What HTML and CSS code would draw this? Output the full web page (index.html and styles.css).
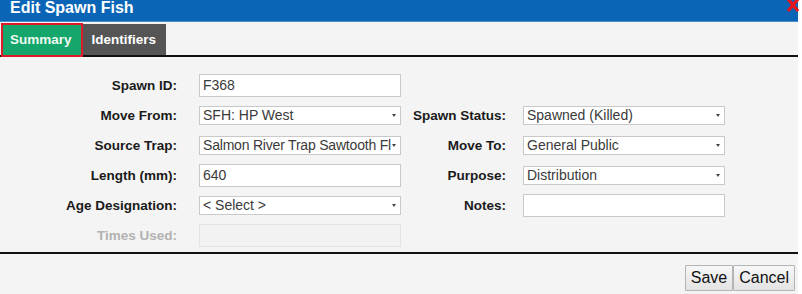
FILE: index.html
```html
<!DOCTYPE html>
<html>
<head>
<meta charset="utf-8">
<link rel="stylesheet" href="styles.css">
</head>
<body>
<div class="dialog">
  <div class="titlebar">
    <span class="title">Edit Spawn Fish</span>
    <svg class="close" width="14" height="16" viewBox="0 0 14 16"><path d="M2 -1 L12 11 M12 -1 L2 11" stroke="#e8141c" stroke-width="3.2" stroke-linecap="butt"/></svg>
  </div>
  <div class="tabbar">
    <div class="tab active">Summary</div>
    <div class="tab">Identifiers</div>
  </div>
  <div class="form">
    <label class="lbl">Spawn ID:</label>
    <div class="field"><div class="input">F368</div></div>
    <div class="lbl2"></div>
    <div></div>

    <label class="lbl">Move From:</label>
    <div class="field"><div class="select"><span class="val">SFH: HP West</span></div></div>
    <label class="lbl2">Spawn Status:</label>
    <div class="field"><div class="select"><span class="val">Spawned (Killed)</span></div></div>

    <label class="lbl">Source Trap:</label>
    <div class="field"><div class="select"><span class="val tight">Salmon River Trap Sawtooth Fl</span></div></div>
    <label class="lbl2">Move To:</label>
    <div class="field"><div class="select"><span class="val">General Public</span></div></div>

    <label class="lbl">Length (mm):</label>
    <div class="field"><div class="input">640</div></div>
    <label class="lbl2">Purpose:</label>
    <div class="field"><div class="select"><span class="val">Distribution</span></div></div>

    <label class="lbl">Age Designation:</label>
    <div class="field"><div class="select"><span class="val">&lt; Select &gt;</span></div></div>
    <label class="lbl2">Notes:</label>
    <div class="field"><div class="input notes"></div></div>

    <label class="lbl disabled">Times Used:</label>
    <div class="field"><div class="input dis"></div></div>
    <div class="lbl2"></div>
    <div></div>
  </div>
  <div class="footer">
    <button class="btn">Save</button><button class="btn">Cancel</button>
  </div>
</div>
</body>
</html>
```

FILE: styles.css
```css
html, body {
  margin: 0;
  padding: 0;
  background: #ffffff;
}
body {
  font-family: "Liberation Sans", Arial, sans-serif;
}
.dialog {
  width: 798px;
  height: 294px;
  background: #f4f4f4;
  display: flex;
  flex-direction: column;
}
.titlebar {
  height: 22px;
  background: #0a65b7;
  border-bottom: 1px solid #4a90cf;
  box-sizing: border-box;
  display: flex;
  justify-content: space-between;
  align-items: flex-start;
}
.title {
  color: #ffffff;
  font-weight: bold;
  font-size: 16px;
  line-height: 16px;
  padding-left: 10px;
}
.close {
  margin-right: -2px;
  margin-top: 0;
}
.tabbar {
  height: 33px;
  box-sizing: content-box;
  border-bottom: 2px solid #111;
  display: flex;
  align-items: flex-end;
  padding-left: 1px;
}
.tab {
  height: 31px;
  background: #555555;
  color: #ffffff;
  font-weight: bold;
  font-size: 13.5px;
  line-height: 31px;
  padding: 0 10px 0 9px;
}
.tab.active {
  height: 30px;
  line-height: 30px;
  background: #14a66a;
  color: #eef9f2;
  border: 2px solid #e0192b;
  padding: 0 9px 0 7px;
  margin-bottom: -2px;
}
.form {
  flex: 1;
  display: grid;
  grid-template-columns: 199px 202px 122px 202px;
  grid-auto-rows: 30px;
  align-items: center;
  padding-top: 13px;
  box-sizing: border-box;
}
.lbl, .lbl2 {
  text-align: right;
  font-weight: bold;
  font-size: 13.5px;
  color: #1a1a1a;
}
.lbl { padding-right: 22px; }
.lbl2 { padding-right: 17px; }
.lbl.disabled { color: #b2b2b2; }
.field { display: flex; }
.input, .select {
  box-sizing: border-box;
  width: 202px;
  background: #ffffff;
  border: 1px solid #c9c9c9;
  font-size: 14px;
  color: #3a3a3a;
  padding-left: 3px;
  white-space: nowrap;
}
.input {
  height: 23px;
  line-height: 21px;
  overflow: hidden;
}
.input.dis {
  background: #f2f2f2;
  border-color: #e3e3e3;
}
.select {
  height: 19px;
  line-height: 17px;
  display: flex;
  align-items: center;
  padding-right: 3px;
}
.val {
  flex: 1;
  overflow: hidden;
  min-width: 0;
}
.val.tight {
  letter-spacing: -0.2px;
}
.select::after {
  content: "";
  flex: none;
  margin-left: 1px;
  margin-right: 1px;
  border-left: 2px solid transparent;
  border-right: 2px solid transparent;
  border-top: 3px solid #444;
}
.footer {
  height: 42px;
  border-top: 2px solid #111;
  box-sizing: border-box;
  display: flex;
  justify-content: flex-end;
  align-items: flex-start;
  padding-top: 11px;
  padding-right: 3px;
}
.btn {
  font-family: "Liberation Sans", Arial, sans-serif;
  font-size: 16px;
  color: #111;
  height: 26px;
  padding: 0 5px;
  background: linear-gradient(#f7f7f7, #e3e3e3);
  border: 1px solid #b4b4b4;
  border-radius: 1px;
  margin: 0;
}
```
